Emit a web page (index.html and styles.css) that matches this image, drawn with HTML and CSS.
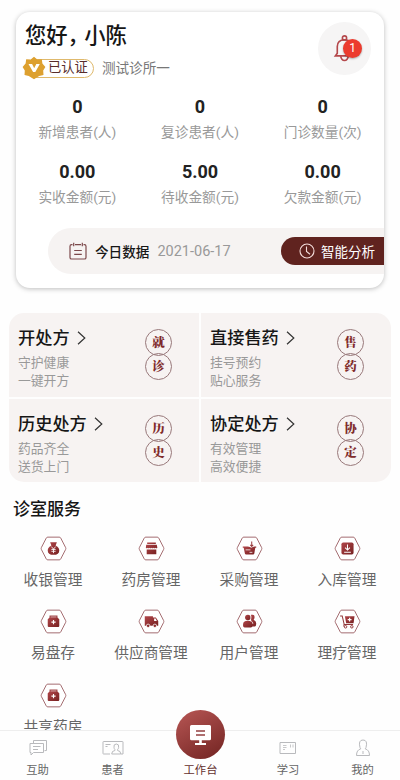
FILE: index.html
```
<!DOCTYPE html>
<html lang="zh-CN">
<head>
<meta charset="utf-8">
<title>工作台</title>
<link rel="stylesheet" href="styles.css">
</head>
<body>
<svg class="defs" width="0" height="0" aria-hidden="true">
  <defs>
    <linearGradient id="red" x1="0" y1="0" x2="1" y2="1"><stop offset="0" stop-color="#b1464a"/><stop offset="1" stop-color="#762020"/></linearGradient>
    <symbol id="hex" viewBox="0 0 28 26"><path d="M8 1.2h12q1 0 1.500.9L26.600 12q.5 1 0 2l-5.100 9.900q-.5.900-1.500.900H8q-1 0-1.500-.900L1.400 14q-.5-1 0-2L6.500 2.100Q7 1.200 8 1.200z" fill="#fff" stroke="#96565a" stroke-width=".9"/></symbol>
    <symbol id="kit" viewBox="0 0 28 26"><path d="M10.500 9V7.300h7V9" fill="none" stroke="#a34a4c" stroke-width="1.300"/><path d="M10.200 8.600h7.600l2.200 2v7.200q0 1-1 1H9q-1 0-1-1v-7.200z" fill="url(#red)"/><path d="M14 11.500v4.400M11.800 13.700h4.400" stroke="#fff" stroke-width="1.200"/></symbol>
  </defs>
</svg>
<main class="screen">
  <section class="summary">
    <header class="hello">
      <div>
        <h1>您好<span class="comma">，</span>小陈</h1>
        <div class="clinic">
          <span class="verified">
            <svg class="seal" viewBox="0 0 24 24"><path d="M12 .8l3.300 2.700 4.500-.3.600 4.400 3 3.400-2.200 3.600.3 4.300-4.300 1.200L12 23.200l-5.200-3.100-4.300-1.200.3-4.300L.6 11l3-3.400.6-4.400 4.500.3z" fill="#dda02f"/><path d="M6.500 8h3.600l2.100 4.200L14.300 8h3.500l-4.500 8h-2.200z" fill="#fff"/></svg>
            <span class="verified-text">已认证</span>
          </span>
          <span class="clinic-name">测试诊所一</span>
        </div>
      </div>
      <div class="bell">
        <svg viewBox="0 0 26 30"><g fill="none" stroke="#b4484b" stroke-width="1.700"><circle cx="13" cy="4" r="2.200"/><path d="M5.500 20V13q0-7 7.500-7t7.500 7v7l2 2.700h-19z"/><path d="M9 23q.8 4.500 4 4.500t4-4.500"/></g></svg>
        <span class="count">1</span>
      </div>
    </header>
    <div class="stats">
      <div class="stat"><b>0</b><span>新增患者(人)</span></div>
      <div class="stat"><b>0</b><span>复诊患者(人)</span></div>
      <div class="stat"><b>0</b><span>门诊数量(次)</span></div>
      <div class="stat"><b>0.00</b><span>实收金额(元)</span></div>
      <div class="stat"><b>5.00</b><span>待收金额(元)</span></div>
      <div class="stat"><b>0.00</b><span>欠款金额(元)</span></div>
    </div>
    <div class="today">
      <svg class="calendar" viewBox="0 0 18 18"><g fill="none" stroke="#7c484a" stroke-width="1.200"><path d="M3.500 2.600H2.600Q1 2.600 1 4.200V15.400Q1 17 2.600 17H15.400Q17 17 17 15.400V4.200Q17 2.600 15.400 2.600H14.500M6 2.600h6M4.700.7v3.600M13.300.7v3.600M5.200 8.500h7.600M5.200 12.300h7.600"/></g></svg>
      <span class="today-title">今日数据</span>
      <span class="date">2021-06-17</span>
      <div class="analyse">
        <svg viewBox="0 0 16 16"><circle cx="8" cy="8" r="7" fill="none" stroke="#f3dcda" stroke-width="1.100"/><path d="M7.500 3.500v5l3.500 2.800" fill="none" stroke="#f3dcda" stroke-width="1.100"/></svg>
        <span>智能分析</span>
      </div>
    </div>
  </section>

  <section class="tiles">
    <div class="tile"><div class="tile-text"><h2>开处方<svg class="chev" viewBox="0 0 9 14"><path d="M1 .8L7.800 7 1 13.200"/></svg></h2><p>守护健康<br>一键开方</p></div><div class="stamp"><i>就</i><i>诊</i></div></div>
    <div class="tile"><div class="tile-text"><h2>直接售药<svg class="chev" viewBox="0 0 9 14"><path d="M1 .8L7.800 7 1 13.200"/></svg></h2><p>挂号预约<br>贴心服务</p></div><div class="stamp"><i>售</i><i>药</i></div></div>
    <div class="tile"><div class="tile-text"><h2>历史处方<svg class="chev" viewBox="0 0 9 14"><path d="M1 .8L7.800 7 1 13.200"/></svg></h2><p>药品齐全<br>送货上门</p></div><div class="stamp"><i>历</i><i>史</i></div></div>
    <div class="tile"><div class="tile-text"><h2>协定处方<svg class="chev" viewBox="0 0 9 14"><path d="M1 .8L7.800 7 1 13.200"/></svg></h2><p>有效管理<br>高效便捷</p></div><div class="stamp"><i>协</i><i>定</i></div></div>
  </section>

  <h3 class="section-title">诊室服务</h3>
  <section class="services">
    <div class="service"><svg viewBox="0 0 28 26"><use href="#hex"/><path d="M10.500 6.500h7l-1.300 3.300q3.800 2 3.800 5.200 0 4.600-6 4.600T8 15q0-3.200 3.800-5.200z" fill="url(#red)"/><path d="M11.700 11l2.300 2.600 2.300-2.600M14 13.500v4.300M11.800 14h4.400M11.800 15.900h4.400" fill="none" stroke="#fff" stroke-width=".9"/></svg><span>收银管理</span></div>
    <div class="service"><svg viewBox="0 0 28 26"><use href="#hex"/><path d="M9.500 6.700h9v1.600h-9zM8.500 9h11l.6 3.200q-1 1.300-2 0-1 1.300-2 0-1 1.300-2 0-1 1.300-2 0-1 1.300-2 0-1 1.300-2 0zM9 14h10v5H9z" fill="url(#red)"/></svg><span>药房管理</span></div>
    <div class="service"><svg viewBox="0 0 28 26"><use href="#hex"/><path d="M7 10.800h14v1.400h-1l-1 6q-.2 1.100-1.300 1.100h-7.200q-1.100 0-1.300-1.100l-1.200-6H7z" fill="url(#red)"/><path d="M12.300 10.500h7l-3.400 1.800z" fill="#fff"/><path d="M16.300 5.800v4.800M14.800 9.300l1.500 1.600 1.500-1.600" fill="none" stroke="#9c4143" stroke-width="1.100"/><path d="M10 14.400h5M14 17h3" stroke="#fff" stroke-width=".8"/></svg><span>采购管理</span></div>
    <div class="service"><svg viewBox="0 0 28 26"><use href="#hex"/><rect x="7.700" y="6.700" width="12.600" height="12.600" rx="1.800" fill="url(#red)"/><path d="M14 8.800v5.500M11.500 12l2.500 2.600 2.500-2.600M10.500 16.800h7" fill="none" stroke="#fff" stroke-width="1.100"/></svg><span>入库管理</span></div>
    <div class="service"><svg viewBox="0 0 28 26"><use href="#hex"/><use href="#kit"/></svg><span>易盘存</span></div>
    <div class="service"><svg viewBox="0 0 28 26"><use href="#hex"/><path d="M7 7.500h8.500v1.300h3l2.500 3.700v5H7z" fill="url(#red)"/><path d="M16.700 10h1.500l1.300 2.500h-2.800z" fill="#fff"/><g fill="#8c2f30" stroke="#fff" stroke-width=".8"><circle cx="10.500" cy="17.500" r="1.800"/><circle cx="17.500" cy="17.500" r="1.800"/></g></svg><span>供应商管理</span></div>
    <div class="service"><svg viewBox="0 0 28 26"><use href="#hex"/><g fill="url(#red)"><path d="M15.500 6h1.800q2 0 2 2.300 0 1.700-1 2.800 2.700 1.500 2.700 4 0 2.400-1.200 3.200h-4z"/><circle cx="12.300" cy="8.800" r="2.900"/><path d="M7.300 16q0-3.900 4.900-3.900t4.900 3.900v1.500q0 1.700-1.700 1.700H9q-1.700 0-1.700-1.700z"/></g><path d="M15.500 7v3M15.200 12q2.300 1.200 2.300 3.500" stroke="#fff" stroke-width=".7" fill="none"/></svg><span>用户管理</span></div>
    <div class="service"><svg viewBox="0 0 28 26"><use href="#hex"/><path d="M6.300 7.200h2.200l2.100 9h9.200M10.500 16.200l-.4 2" fill="none" stroke="#93383a" stroke-width="1.100"/><path d="M11.300 7.500h10l-1 7.200h-7.700z" fill="url(#red)"/><path d="M16.200 9v4M14.200 11h4" stroke="#fff" stroke-width="1.200"/><g fill="#fff" stroke="#93383a"><circle cx="12" cy="18.500" r="1.300"/><circle cx="18.500" cy="18.500" r="1.300"/></g></svg><span>理疗管理</span></div>
    <div class="service"><svg viewBox="0 0 28 26"><use href="#hex"/><use href="#kit"/></svg><span>共享药房</span></div>
  </section>
</main>

<nav class="tabs">
  <div class="tab"><svg viewBox="0 0 22 18"><g fill="#fff" stroke="#b9babd"><path d="M6.500 4V1.500h13v10l-2 .1"/><path d="M3 4.500h13.500v9H6.500L4 16v-2.500H3z"/><path d="M6 7.500h7.500M6 10.500h5"/></g></svg><span>互助</span></div>
  <div class="tab"><svg viewBox="0 0 22 18"><g fill="none" stroke="#b9babd"><path d="M8 15H1.500q-.5 0-.5-.5V3q0-.5.5-.5h19q.5 0 .5.500V15h-2M3.500 5.500h5M3.500 7.500h2"/><path d="M12 8.500q-.7-3.500 2.300-3.500t2.300 3.500q0 1-1 2v1q3.200.3 3.200 3.500H9.700q0-3.200 3.200-3.500v-1q-.9-1-.9-2z"/></g></svg><span>患者</span></div>
  <div class="tab active"><div class="orb"><svg viewBox="0 0 24 24"><path d="M3 2h18q1.500 0 1.500 1.500v12.200q0 1.500-1.500 1.500h-7.700V20h4.200v2h-11v-2h4.200v-2.800H3q-1.500 0-1.500-1.500V3.500Q1.500 2 3 2z" fill="#fff"/><path d="M7.500 8h9M7.500 12h9" stroke="#944042" stroke-width="1.500"/></svg></div><span>工作台</span></div>
  <div class="tab"><svg viewBox="0 0 22 18"><g fill="none" stroke="#b9babd"><path d="M3 3.500h15.500v11H3z"/><path d="M6 6.500h3.500M6 8.500h3.500M6 10.500h2M13.500 5.500v3M16 5.500v3" stroke-width=".8"/></g></svg><span>学习</span></div>
  <div class="tab"><svg viewBox="0 0 22 18"><path d="M8 8.500Q6 1 11 1t3 7.500l-.8 1.300q4.300 1.200 4.300 6.700h-13q0-5.500 4.300-6.700zM11 12v3" fill="none" stroke="#b9babd"/></svg><span>我的</span></div>
</nav>
</body>
</html>
```
FILE: styles.css
```
* { box-sizing: border-box; }

body {
  margin: 0;
  width: 400px;
  height: 780px;
  overflow: hidden;
  display: flex;
  flex-direction: column;
  background: #fefefe;
  font-family: Roboto, "Noto Sans CJK SC", sans-serif;
  color: #161616;
}

h1, h2, h3, p { margin: 0; font-weight: 500; }
svg { display: block; flex: none; }
.defs { position: absolute; }

.screen {
  flex: none;
  height: 730px;
  overflow: hidden;
  padding: 12px 9px 0;
}

.summary {
  margin: 0 7px;
  height: 276px;
  border-radius: 14px;
  background: #fff;
  box-shadow: 0 1px 5px rgba(0, 0, 0, .26);
  overflow: hidden;
}

.hello {
  display: flex;
  justify-content: space-between;
  height: 80px;
  padding: 10px 13px 0 9px;
}

h1 { display: flex; font-size: 21.300px; line-height: 28px; white-space: nowrap; }
.comma { margin-right: 6px; font-feature-settings: "halt"; }

.clinic { display: flex; align-items: center; margin: 6px 0 0 -3px; height: 24px; }
.verified { display: flex; align-items: center; }
.seal { width: 24px; height: 24px; z-index: 1; }
.verified-text {
  height: 19px;
  margin-left: -12px;
  padding: 0 5px 0 13px;
  border: 1px solid #dfb96c;
  border-radius: 0 10px 10px 0;
  font-size: 13.300px;
  line-height: 16px;
  color: #572c2b;
}
.clinic-name { margin-left: 8px; font-size: 13.600px; line-height: 18px; color: #777; }

.bell {
  position: relative;
  display: flex;
  align-items: center;
  justify-content: center;
  width: 53px;
  height: 53px;
  border-radius: 50%;
  background: #f6f5f5;
}
.bell svg { width: 25px; height: 29px; }
.count {
  position: absolute;
  left: 25px;
  top: 17px;
  width: 19px;
  height: 19px;
  border-radius: 50%;
  background: #ec3b2e;
  box-shadow: 0 1px 2px rgba(0, 0, 0, .3);
  color: #fff;
  font-size: 12px;
  line-height: 19px;
  text-align: center;
}

.stats { display: grid; grid-template-columns: repeat(3, 1fr); grid-auto-rows: 65px; }
.stat { display: flex; flex-direction: column; align-items: center; padding-top: 4px; }
.stat b { font-size: 18px; line-height: 22px; font-weight: 700; color: #222; }
.stat span { margin-top: 4px; font-size: 13.700px; line-height: 20px; color: #999; }

.today {
  display: flex;
  align-items: center;
  height: 46px;
  margin: 6px 0 0 32px;
  padding-left: 21px;
  border-radius: 23px 0 0 23px;
  background: #f6f3f2;
}
.calendar { width: 18px; height: 18px; }
.today-title { margin-left: 8px; font-size: 13.600px; font-weight: 500; }
.date { margin-left: 8px; font-size: 14.500px; color: #999; }
.analyse {
  display: flex;
  align-items: center;
  gap: 6px;
  width: 103px;
  height: 28px;
  margin-left: auto;
  padding-left: 18px;
  border-radius: 14px 0 0 14px;
  background: #60231f;
  color: #fff;
  font-size: 13.500px;
  white-space: nowrap;
}
.analyse svg { width: 16px; height: 16px; }

.tiles {
  display: grid;
  grid-template-columns: 190px 190px;
  grid-template-rows: 84px 83px;
  gap: 2px;
  margin-top: 25px;
  border-radius: 15px;
  overflow: hidden;
}
.tile {
  display: flex;
  justify-content: space-between;
  padding: 14px 27px 0 9px;
  background: #f7f3f2;
}
h2 { display: flex; align-items: center; font-size: 17.200px; line-height: 23px; }
.chev { width: 9px; height: 14px; margin: -2px 0 0 7px; }
.chev path { fill: none; stroke: #333; stroke-width: 1.200; }
.tile p { margin-top: 4px; font-size: 12.800px; line-height: 17.500px; font-weight: 400; color: #999; }
.stamp { padding-top: 2px; }
.stamp i {
  display: block;
  width: 27px;
  height: 27px;
  border: 1px solid #98787a;
  border-radius: 50%;
  font: 900 12.500px/24px "Noto Serif CJK SC", "Noto Sans CJK SC", serif;
  text-align: center;
  color: #802b2b;
}
.stamp i + i { margin-top: -3px; }

.section-title { margin: 15px 0 0 4px; font-size: 17px; line-height: 24px; }

.services {
  display: grid;
  grid-template-columns: repeat(4, 98px);
  grid-auto-rows: 73.300px;
  margin: 15px -5px 0;
}
.service { display: flex; flex-direction: column; align-items: center; white-space: nowrap; }
.service > svg { width: 27px; height: 25px; }
.service span { margin-top: 8px; font-size: 14.700px; line-height: 22px; color: #666; }

.tabs {
  flex: none;
  display: grid;
  grid-template-columns: 75px 75px 101px 74px 75px;
  height: 50px;
  border-top: 1px solid #eee;
  background: #fefefe;
}
.tab {
  display: flex;
  flex-direction: column;
  align-items: center;
  padding-top: 8px;
  font-size: 11.300px;
  line-height: 16px;
  color: #666;
}
.tab svg { width: 22px; height: 18px; }
.tab span { margin-top: 6px; }
.active { padding-top: 0; color: #64302d; }
.active span { margin-top: 4px; }
.orb {
  display: flex;
  align-items: center;
  justify-content: center;
  width: 49px;
  height: 49px;
  margin-top: -21px;
  border-radius: 50%;
  background: linear-gradient(150deg, #b85755, #712321);
}
.tab .orb svg { width: 25px; height: 24px; }
```
